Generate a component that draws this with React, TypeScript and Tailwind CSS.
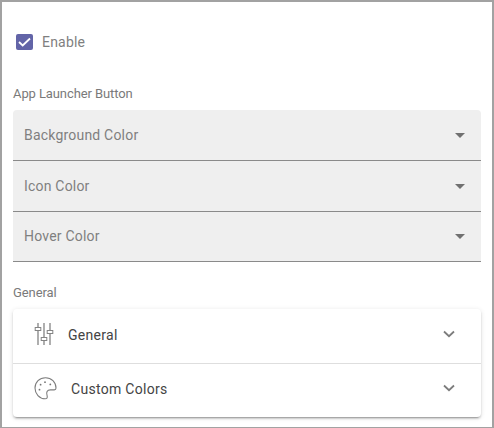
import type { ReactNode } from 'react';

function SelectField({ label, className }: { label: string; className: string }) {
  return (
    <div className={`flex items-center justify-between border-b border-[#8a8a8a] bg-[#efefef] pl-[11px] pr-4 ${className}`}>
      <span className="text-sm leading-5 tracking-[0.2px] text-[#7f7f7f]">{label}</span>
      <svg width="10" height="5" viewBox="0 0 10 5" className="mt-px fill-[#707070]">
        <path d="M0 0h10L5 5z" />
      </svg>
    </div>
  );
}

function PanelRow({ icon, label, className }: { icon: ReactNode; label: string; className: string }) {
  return (
    <div className={`flex items-center pl-[21px] pr-[26px] ${className}`}>
      {icon}
      <span className="text-sm leading-5 tracking-[0.3px] text-[#444444]">{label}</span>
      <svg width="12" height="8" viewBox="0 0 12 8" className="mb-0.5 ml-auto fill-none stroke-[#7c7c7c]" strokeWidth="1.8">
        <path d="M1 1.5l5 4.7 5-4.7" />
      </svg>
    </div>
  );
}

function SlidersIcon() {
  return (
    <svg width="20" height="24" viewBox="0 0 20 24" className="mb-px mr-3.5 shrink-0 fill-white stroke-[#848484]">
      <path d="M4 1v22M10 1v22M16 1v22" strokeWidth="1.3" />
      <rect x="1.2" y="5.5" width="5.6" height="3" />
      <rect x="7.2" y="15.5" width="5.6" height="3" />
      <rect x="13.2" y="8.5" width="5.6" height="3" />
    </svg>
  );
}

function PaletteIcon() {
  return (
    <svg width="23" height="24" viewBox="0 0 23 24" className="mr-3.5 shrink-0">
      <path
        d="M11.5 .7C5.5 .7 1 5 1 11c0 5.8 4.4 10.8 10.2 10.8 1.9 0 2.4-1.3 1.9-3.1-1.1-3.4-.1-5.8 3.3-5.8h3.9c1.1 0 1.7-.6 1.7-1.8C22 5.1 17.4 .7 11.5 .7z"
        fill="none"
        stroke="#7d7d7d"
        strokeWidth="1.1"
      />
      <g fill="#777777">
        <circle cx="6.6" cy="7.7" r=".9" />
        <circle cx="11" cy="5.2" r=".9" />
        <circle cx="16.3" cy="7.4" r=".9" />
        <circle cx="5.5" cy="12.7" r=".9" />
      </g>
    </svg>
  );
}

export default function App() {
  return (
    <main className="h-[428px] w-[494px] border-2 border-b border-[#a2a2a2] bg-white px-[11px] pt-8 font-[Roboto,sans-serif]">
      <div className="flex h-4 items-center gap-[9px] pl-[3px]">
        <span className="flex h-4 w-[17px] items-center justify-center rounded-xs bg-[#6264a7]">
          <svg width="13" height="10" viewBox="0 0 13 10" fill="none" stroke="white" strokeWidth="1.8">
            <path d="M1 5l3.7 3.5L12 1.5" />
          </svg>
        </span>
        <span className="text-sm leading-5 tracking-[0.2px] text-[#7f7f7f]">Enable</span>
      </div>

      <h2 className="mt-9 text-[13px] leading-4 tracking-[-0.1px] text-[#7a7a7a]">App Launcher Button</h2>
      <div className="mt-2 w-[468px] overflow-hidden rounded-t">
        <SelectField label="Background Color" className="h-[51px]" />
        <SelectField label="Icon Color" className="h-[51px]" />
        <SelectField label="Hover Color" className="h-[50px] pb-px" />
      </div>

      <h2 className="mt-[23px] text-[13px] leading-4 tracking-[-0.1px] text-[#7a7a7a]">General</h2>
      <div className="mt-2 w-[468px] rounded bg-white shadow-[0_3px_1px_-2px_rgba(0,0,0,0.2),0_2px_2px_0_rgba(0,0,0,0.14),0_1px_5px_0_rgba(0,0,0,0.12)]">
        <PanelRow icon={<SlidersIcon />} label="General" className="h-[55px] border-b border-[#dedede] pb-[3px]" />
        <PanelRow icon={<PaletteIcon />} label="Custom Colors" className="h-[53px] pb-1" />
      </div>
    </main>
  );
}
